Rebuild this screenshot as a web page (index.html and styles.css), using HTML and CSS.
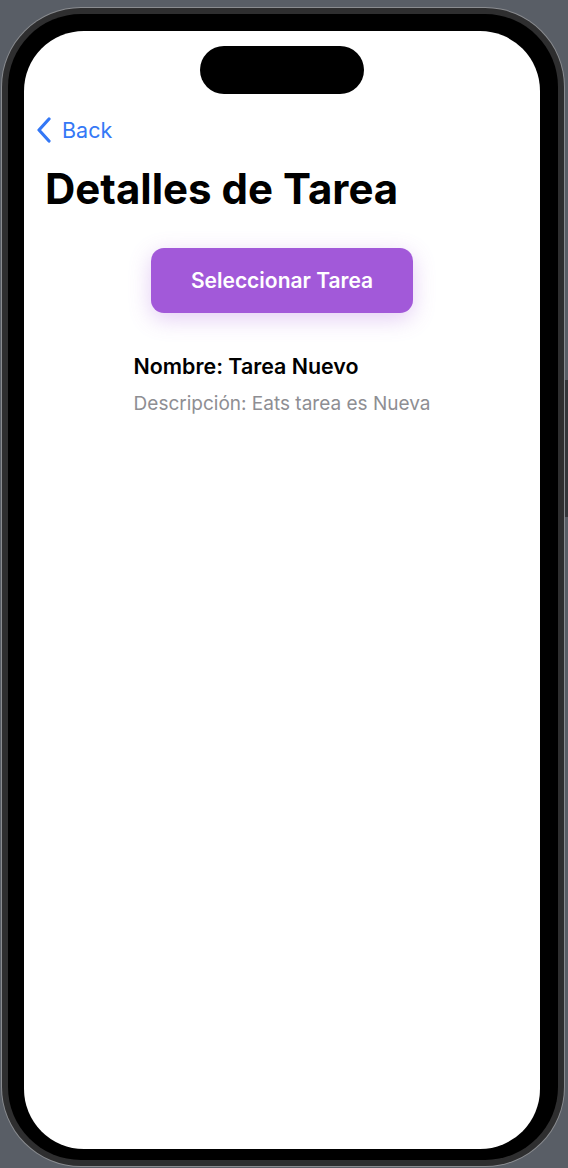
FILE: index.html
```html
<!DOCTYPE html>
<html lang="es">
<head>
<meta charset="utf-8">
<title>Detalles de Tarea</title>
<link rel="stylesheet" href="styles.css">
</head>
<body>
<div class="phone">
  <div class="rim">
    <div class="bezel">
      <div class="screen">
        <div class="island"></div>
        <div class="nav">
          <svg class="chevron" width="16" height="26" viewBox="0 0 16 26"><path d="M13 2 L3 13 L13 24" fill="none" stroke="#3478f6" stroke-width="3.2" stroke-linecap="round" stroke-linejoin="round"/></svg>
          <span class="back">Back</span>
        </div>
        <h1 class="title">Detalles de Tarea</h1>
        <div class="actions">
          <button class="select-btn">Seleccionar Tarea</button>
        </div>
        <div class="info">
          <div class="info-inner">
            <div class="name">Nombre: Tarea Nuevo</div>
            <div class="desc">Descripción: Eats tarea es Nueva</div>
          </div>
        </div>
      </div>
    </div>
  </div>
  <div class="side-btn"></div>
</div>
</body>
</html>
```

FILE: styles.css
```css
html, body {
  margin: 0;
  padding: 0;
  background: #595e66;
  width: 568px;
  height: 1168px;
  overflow: hidden;
  font-family: Inter, "Noto Sans", "Liberation Sans", sans-serif;
}

.phone {
  position: relative;
  margin: 7px 0 0 1px;
  width: 564px;
  height: 1160px;
  box-sizing: border-box;
  padding: 1px;
  border-radius: 80px;
  background: #8a8c90;
}

.rim {
  height: 100%;
  box-sizing: border-box;
  padding: 6px;
  border-radius: 79px;
  background: #2e2e2f;
}

.bezel {
  height: 100%;
  box-sizing: border-box;
  padding: 17px 18px 11px 16px;
  border-radius: 73px;
  background: #000;
}

.screen {
  position: relative;
  height: 100%;
  border-radius: 60px;
  background: #fff;
  overflow: hidden;
}

.island {
  position: absolute;
  top: 15px;
  left: 176px;
  width: 164px;
  height: 48px;
  border-radius: 24px;
  background: #000;
}

.side-btn {
  position: absolute;
  right: -3px;
  top: 373px;
  width: 3px;
  height: 137px;
  background: #34363a;
}

.nav {
  display: flex;
  align-items: center;
  gap: 10px;
  padding: 86px 0 0 12px;
  height: 26px;
}

.chevron {
  display: block;
}

.back {
  color: #3478f6;
  font-size: 21.5px;
  line-height: 26px;
}

.title {
  margin: 20px 0 0 21px;
  font-size: 42px;
  line-height: 52px;
  font-weight: 700;
  letter-spacing: 0;
  color: #000;
}

.actions {
  display: flex;
  justify-content: center;
  margin-top: 33px;
}

.select-btn {
  width: 262px;
  height: 65px;
  border: none;
  border-radius: 13px;
  background: #a259d9;
  color: #fff;
  font-family: inherit;
  font-size: 21px;
  font-weight: 600;
  box-shadow: 0 6px 22px rgba(162, 89, 217, 0.3);
}

.info {
  display: flex;
  justify-content: center;
  margin-top: 39px;
}

.info-inner {
  display: flex;
  flex-direction: column;
  gap: 12px;
}

.name {
  font-size: 21.4px;
  line-height: 28px;
  font-weight: 600;
  color: #000;
}

.desc {
  font-size: 19px;
  line-height: 24px;
  color: #8e8e93;
}
```
